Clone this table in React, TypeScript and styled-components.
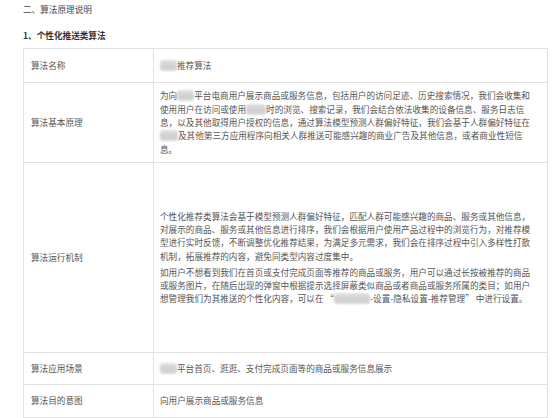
import React from "react";
import styled, { createGlobalStyle } from "styled-components";

const Global = createGlobalStyle`
  * { box-sizing: border-box; }
  html, body { margin: 0; padding: 0; background: #fff; }
  body {
    font-family: "Noto Sans CJK SC", "Noto Sans", sans-serif;
    font-size: 8.62px;
    line-height: 13.3px;
    color: #555;
  }
`;

const Page = styled.div`
  padding: 3px 0 0 23px;
  width: 556px;
`;

const SectionTitle = styled.div`
  color: #444;
  height: 13.3px;
  margin-bottom: 13px;
`;

const SubTitle = styled.div`
  color: #333;
  font-weight: 700;
  height: 13.3px;
  margin-bottom: 5.5px;
`;

const Table = styled.table`
  border-collapse: collapse;
  width: 525px;
  table-layout: fixed;
  border: 1px solid #e2e2e2;
`;

const Row = styled.tr<{ $h: number }>`
  height: ${(p) => p.$h}px;
`;

const LabelCell = styled.td`
  width: 130px;
  border: 1px solid #e2e2e2;
  padding: 6px 7px 6px 7px;
  vertical-align: middle;
  color: #555;
`;

const ValueCell = styled.td`
  border: 1px solid #e2e2e2;
  padding: 6px 14px 6px 6px;
  vertical-align: middle;
  color: #555;
  word-break: break-all;
`;

const Para = styled.p`
  margin: 0;
  & + & { margin-top: 2.7px; }
`;

const Blur = styled.span<{ $w: number }>`
  display: inline-block;
  width: ${(p) => p.$w}px;
  height: 11px;
  vertical-align: -2px;
  background: linear-gradient(180deg, #e2e2e2 0%, #cfcfcf 55%, #d8d8d8 100%);
  border-radius: 3px;
  filter: blur(0.8px);
`;

export default function App() {
  return (
    <>
      <Global />
      <Page>
        <SectionTitle>二、算法原理说明</SectionTitle>
        <SubTitle>1、个性化推送类算法</SubTitle>
        <Table>
          <tbody>
            <Row $h={34}>
              <LabelCell>算法名称</LabelCell>
              <ValueCell>
                <Blur $w={17} />推荐算法
              </ValueCell>
            </Row>
            <Row $h={80}>
              <LabelCell>算法基本原理</LabelCell>
              <ValueCell>
                为向<Blur $w={17} />平台电商用户展示商品或服务信息，包括用户的访问足迹、历史搜索情况，我们会收集和使用用户在访问或使用<Blur $w={20} />时的浏览、搜索记录，我们会结合依法收集的设备信息、服务日志信息，以及其他取得用户授权的信息，通过算法模型预测人群偏好特征，我们会基于人群偏好特征在<Blur $w={18} />及其他第三方应用程序向相关人群推送可能感兴趣的商业广告及其他信息，或者商业性短信息。
              </ValueCell>
            </Row>
            <Row $h={190}>
              <LabelCell>算法运行机制</LabelCell>
              <ValueCell>
                <Para>
                  个性化推荐类算法会基于模型预测人群偏好特征，匹配人群可能感兴趣的商品、服务或其他信息，对展示的商品、服务或其他信息进行排序，我们会根据用户使用产品过程中的浏览行为，对推荐模型进行实时反馈，不断调整优化推荐结果，为满足多元需求，我们会在排序过程中引入多样性打散机制，拓展推荐的内容，避免同类型内容过度集中。
                </Para>
                <Para>
                  如用户不想看到我们在首页或支付完成页面等推荐的商品或服务，用户可以通过长按被推荐的商品或服务图片，在随后出现的弹窗中根据提示选择屏蔽类似商品或者商品或服务所属的类目；如用户想管理我们为其推送的个性化内容，可以在 “<Blur $w={36} />-设置-隐私设置-推荐管理” 中进行设置。
                </Para>
              </ValueCell>
            </Row>
            <Row $h={32}>
              <LabelCell>算法应用场景</LabelCell>
              <ValueCell>
                <Blur $w={17} />平台首页、逛逛、支付完成页面等的商品或服务信息展示
              </ValueCell>
            </Row>
            <Row $h={33}>
              <LabelCell>算法目的意图</LabelCell>
              <ValueCell>向用户展示商品或服务信息</ValueCell>
            </Row>
          </tbody>
        </Table>
      </Page>
    </>
  );
}
